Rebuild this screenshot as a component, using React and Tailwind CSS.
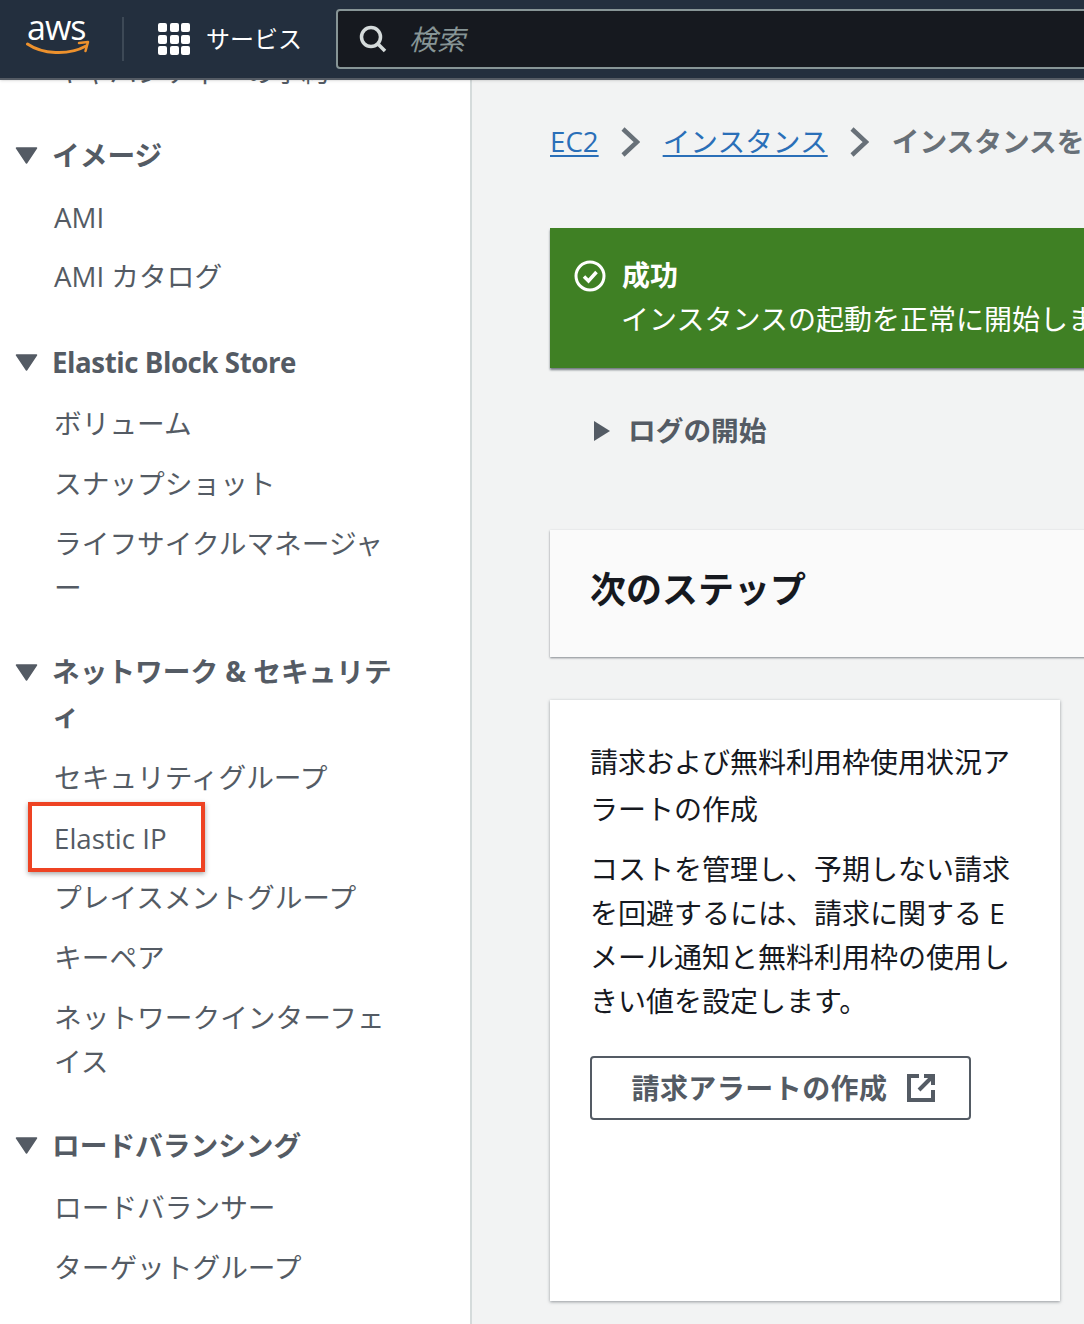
import React from "react";

function Caret() {
  return (
    <svg width="23" height="17" viewBox="0 0 23 17" className="shrink-0 mt-[15px]">
      <path d="M1.5 1 H21.5 L11.5 16 Z" fill="#545b64" stroke="#545b64" strokeWidth="1.5" strokeLinejoin="round" />
    </svg>
  );
}

function Section({ title, children, className = "", titleClass = "leading-[46px]" }) {
  return (
    <section className={className}>
      <div className="flex gap-[14px] pl-[15px]">
        <Caret />
        <h3 className={"text-[27.7px] font-bold text-[#545b64] w-[345px] " + titleClass}>{title}</h3>
      </div>
      <ul className="pl-[54px] pr-[84px] text-[27.7px] leading-[44px] text-[#545b64]">{children}</ul>
    </section>
  );
}

function Item({ children, className = "" }) {
  return <li className={"mt-[16px] " + className}>{children}</li>;
}

function Chevron() {
  return (
    <svg width="20" height="32" viewBox="0 0 20 32" className="shrink-0">
      <path d="M3 3 L17 16 L3 29" fill="none" stroke="#687078" strokeWidth="4.5" />
    </svg>
  );
}

function AwsLogo() {
  return (
    <div className="relative w-[64px] h-[42px] shrink-0">
      <div className="absolute left-[1px] top-[-11px] text-[34px] leading-[40px] text-white font-['Open_Sans',sans-serif] tracking-[-1px]">aws</div>
      <svg width="64" height="20" viewBox="0 0 64 20" className="absolute left-0 top-[22px]">
        <path d="M1.5 4 C16 14 42 16 60 6" fill="none" stroke="#ec912d" strokeWidth="3" strokeLinecap="round" />
        <path d="M53 3 L62 2 L59.5 11" fill="none" stroke="#ec912d" strokeWidth="2.5" strokeLinejoin="round" strokeLinecap="round" />
      </svg>
    </div>
  );
}

function Grid() {
  return (
    <div className="grid grid-cols-3 gap-[2.5px] w-[32px] shrink-0">
      {Array.from({ length: 9 }).map((_, i) => (
        <span key={i} className="w-[9px] h-[9px] rounded-[2px] bg-white" />
      ))}
    </div>
  );
}

export default function App() {
  return (
    <div className="w-[1084px] h-[1324px] overflow-hidden bg-[#f2f3f3] flex flex-col font-['Open_Sans','Noto_Sans_CJK_JP',sans-serif]">
      <header className="h-[80px] shrink-0 bg-[#232f3e] border-b-2 border-[#545b64] flex items-center pl-[26px] z-10 shadow-sm overflow-hidden">
        <AwsLogo />
        <div className="w-[2px] h-[44px] shrink-0 bg-[#3d4956] ml-[32px] mr-[34px]" />
        <Grid />
        <span className="ml-[16px] text-[24px] text-white whitespace-nowrap">サービス</span>
        <div className="ml-[34px] h-[60px] w-[800px] shrink-0 bg-[#16191f] border-2 border-[#879596] rounded-[4px] flex items-center pl-[21px]">
          <svg width="28" height="28" viewBox="0 0 28 28" className="shrink-0">
            <circle cx="12" cy="12" r="9.5" fill="none" stroke="#d5dbdb" strokeWidth="3.5" />
            <path d="M18.5 18.5 L26 26" stroke="#d5dbdb" strokeWidth="3.5" />
          </svg>
          <span className="ml-[22px] text-[28px] italic text-[#879596]">検索</span>
        </div>
      </header>

      <div className="flex flex-1 min-h-0">
        <aside className="w-[472px] shrink-0 bg-white border-r-2 border-[#d5dbdb] overflow-hidden">
          <p className="pl-[54px] mt-[-31px] text-[27.7px] leading-[44px] text-[#545b64] whitespace-nowrap">キャパシティーの予約</p>
          <Section title="イメージ" className="mt-[39px]">
            <Item className="!mt-[17px]">AMI</Item>
            <Item className="!mt-[15px]">AMI カタログ</Item>
          </Section>
          <Section title="Elastic Block Store" titleClass="leading-[46px] tracking-[-0.45px]" className="mt-[41px]">
            <Item className="!mt-[16px]">ボリューム</Item>
            <Item>スナップショット</Item>
            <Item>ライフサイクルマネージャー</Item>
          </Section>
          <Section title="ネットワーク & セキュリティ" titleClass="leading-[44px]" className="mt-[40px]">
            <Item className="!mt-[18px]">セキュリティグループ</Item>
            <Item className="relative !mt-[17px]">
              Elastic IP
              <span className="absolute left-[-26px] top-[-14px] w-[177px] h-[70px] border-[4px] border-[#ee4323] shadow-[0_2px_5px_rgba(0,0,0,0.35)]" />
            </Item>
            <Item className="!mt-[15px]">プレイスメントグループ</Item>
            <Item>キーペア</Item>
            <Item>ネットワークインターフェイス</Item>
          </Section>
          <Section title="ロードバランシング" className="mt-[39px]">
            <Item className="!mt-[17px]">ロードバランサー</Item>
            <Item>ターゲットグループ</Item>
          </Section>
        </aside>

        <main className="flex-1 min-w-0 pl-[78px] pt-[38px] overflow-hidden">
          <nav className="flex items-center h-[48px] text-[27.7px] whitespace-nowrap w-[800px]">
            <a className="text-[#2a6fb8] underline underline-offset-[3px]">EC2</a>
            <span className="ml-[21px] mr-[23px]"><Chevron /></span>
            <a className="text-[#2a6fb8] underline underline-offset-[3px]">インスタンス</a>
            <span className="ml-[21px] mr-[23px]"><Chevron /></span>
            <span className="font-bold text-[#687078]">インスタンスを起動</span>
          </nav>

          <div className="mt-[62px] w-[800px] h-[140px] bg-[#3f8024] shadow-[0_2px_2px_rgba(84,91,100,0.8)] flex pl-[24px] pt-[25px] text-white">
            <svg width="32" height="32" viewBox="0 0 32 32" className="shrink-0 mt-[7px]">
              <circle cx="16" cy="16" r="14" fill="none" stroke="#fff" strokeWidth="3" />
              <path d="M10 16.5 L14.5 21 L22.5 12" fill="none" stroke="#fff" strokeWidth="3.5" />
            </svg>
            <div className="ml-[16px] text-[28px] leading-[44px] whitespace-nowrap">
              <div className="font-bold">成功</div>
              <div className="ml-[-1px]">インスタンスの起動を正常に開始しました</div>
            </div>
          </div>

          <div className="mt-[40px] ml-[44px] flex items-center h-[46px]">
            <svg width="16" height="20" viewBox="0 0 16 20" className="shrink-0"><path d="M0 0 L16 10 L0 20 Z" fill="#545b64" /></svg>
            <span className="ml-[18px] text-[27.7px] font-bold text-[#545b64]">ログの開始</span>
          </div>

          <div className="mt-[76px] w-[800px] h-[127px] bg-[#fafafa] shadow-[0_1px_2px_rgba(84,91,100,0.7)] flex items-center pl-[40px] pb-[8px]">
            <h2 className="text-[36px] font-bold text-[#16191f]">次のステップ</h2>
          </div>

          <div className="mt-[43px] w-[510px] h-[601px] bg-white shadow-[0_1px_3px_rgba(84,91,100,0.6)] px-[40px] pt-[39px] text-[28px] leading-[44px] text-[#16191f]">
            <p className="leading-[47px]">請求および無料利用枠使用状況アラートの作成</p>
            <p className="mt-[14px]">コストを管理し、予期しない請求を回避するには、請求に関する E メール通知と無料利用枠の使用しきい値を設定します。</p>
            <button className="mt-[33px] w-[381px] h-[64px] border-2 border-[#545b64] rounded-[4px] flex items-center justify-center pl-[6px] text-[28px] tracking-[0.45px] font-bold text-[#545b64]">
              請求アラートの作成
              <svg width="30" height="30" viewBox="0 0 30 30" className="ml-[18px] shrink-0">
                <path d="M13 3 H3 V27 H27 V17" fill="none" stroke="#545b64" strokeWidth="4" />
                <path d="M18 3 H27 V12 M26 4 L13 17" fill="none" stroke="#545b64" strokeWidth="4" />
              </svg>
            </button>
          </div>
        </main>
      </div>
    </div>
  );
}
